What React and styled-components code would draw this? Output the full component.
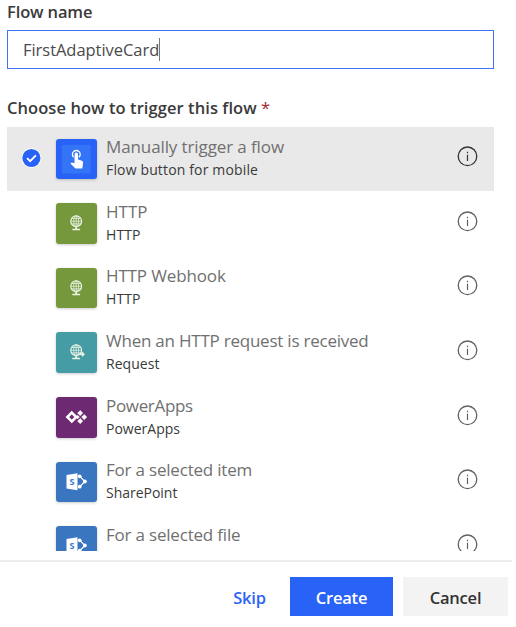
import React from 'react';
import styled, { createGlobalStyle } from 'styled-components';

const Global = createGlobalStyle`
  * { box-sizing: border-box; }
  body { margin: 0; background: #fff; overflow: hidden; font-family: "Open Sans", "Noto Sans", sans-serif; color: #333; }
`;

const Dialog = styled.main`
  width: 516px;
  height: 627px;
  display: flex;
  flex-direction: column;
  overflow: hidden;
`;

const Form = styled.div`
  padding: 0 22px 0 7px;
  height: 551px;
  overflow: hidden;
`;

const Label = styled.label`
  display: block;
  height: ${p => p.$height}px;
  line-height: 24px;
  font-size: 16.5px;
  font-weight: 600;
  letter-spacing: ${p => p.$spacing}px;
  white-space: nowrap;
  color: #3a3a3a;
`;

const Required = styled.span`
  color: #a4262c;
  font-weight: 400;
`;

const Field = styled.div`
  display: flex;
  align-items: center;
  height: 39px;
  margin-bottom: 27px;
  padding-left: 15px;
  border: 1px solid #3d73f5;
  font-size: 16.5px;
  letter-spacing: -0.04px;
  color: #4a4a4a;
`;

const Caret = styled.span`
  width: 1px;
  height: 23px;
  background: #777;
`;

const List = styled.ul`
  margin: 0;
  padding: 0;
  list-style: none;
`;

const Row = styled.li`
  display: flex;
  height: 64.67px;
  padding: 12px 16px 0 15px;
  background: ${p => (p.$selected ? '#e9e9e9' : '#fff')};
  color: ${p => (p.$selected ? '#333' : '#606060')};
`;

const CheckSlot = styled.div`
  width: 34px;
  padding-top: 9.5px;
  svg { display: block; }
`;

const Tile = styled.div`
  width: 40.5px;
  height: 40.5px;
  border-radius: 3px;
  overflow: hidden;
  background: ${p => p.$color};
  box-shadow: 0 1px 3px rgba(0, 0, 0, 0.2);
  svg { display: block; }
`;

const Texts = styled.div`
  flex: 1;
  margin: -3.4px 0 0 9.5px;
  white-space: nowrap;
`;

const Title = styled.div`
  font-size: 17px;
  line-height: 24px;
  letter-spacing: ${p => p.$spacing}px;
  color: #707070;
`;

const Subtitle = styled.div`
  font-size: 14px;
  line-height: 21.4px;
  letter-spacing: ${p => p.$spacing}px;
  color: #3a3a3a;
`;

const InfoSlot = styled.div`
  padding-top: 7.4px;
  svg { display: block; }
`;

const Footer = styled.footer`
  display: flex;
  justify-content: flex-end;
  gap: 10px;
  margin-top: 9px;
  width: 512px;
  height: 67px;
  padding: 15px 4px 0 0;
  border-top: 2px solid #ededed;
`;

const variants = {
  link: 'background: #fff; color: #2b63f6;',
  primary: 'background: #2962f6; color: #fff;',
  neutral: 'background: #f3f3f3; color: #333;',
};

const Button = styled.button`
  width: ${p => p.$width}px;
  height: 39px;
  padding: 2px 0 0;
  border: 0;
  font: 600 16.5px "Open Sans", "Noto Sans", sans-serif;
  letter-spacing: -0.2px;
  ${p => variants[p.$variant]}
`;

const Check = () => (
  <svg width="20" height="21" viewBox="0 0 20 21">
    <circle cx="9.4" cy="10" r="10" fill="#fff" />
    <circle cx="9.4" cy="10" r="9.1" fill="#2962f6" />
    <path d="M5.1 10.2l3 3 5.8-5.9" fill="none" stroke="#fff" strokeWidth="1.9" />
  </svg>
);

const Info = () => (
  <svg width="21" height="21" viewBox="0 0 21 21">
    <circle cx="10.5" cy="10.3" r="9.3" fill="none" stroke="currentColor" strokeWidth="1.3" />
    <path d="M10.5 8.7v6.2M10.5 5.8v1.5" stroke="currentColor" strokeWidth="1.2" />
  </svg>
);

const Touch = () => (
  <svg width="40" height="40" viewBox="0 0 40 40">
    <rect x="6" y="6" width="28.5" height="28.5" fill="#3474f7" />
    <path d="M17.6 18.200a3.9 3.9 0 1 1 5.400 0" fill="none" stroke="#fff" strokeWidth="1.3" />
    <path d="M18.500 15.400a1.800 1.800 0 0 1 3.600 0v5l3.900 1.400q1.300.5 1.100 1.900l-.8 5.800h-6.900l-4.900-4.900 1.200-1.200 2.800.8z" fill="#fff" />
  </svg>
);

const Globe = ({ arrow }) => (
  <svg width="40" height="40" viewBox="0 0 40 40">
    <g fill="none" stroke="#eaf3e4" strokeWidth="1">
      <circle cx="20.2" cy="18.2" r="5.4" strokeWidth="1.2" />
      <ellipse cx="20.2" cy="18.2" rx="2.5" ry="5.4" strokeWidth="0.8" />
      <path d="M14.8 18.2h10.8M15.7 15.5h9M15.7 20.9h9M20.2 12.8v10.8" strokeWidth="0.8" />
      <path d="M20.2 23.6v2.4" strokeWidth="1.8" />
      <path d="M16.3 26.5h7.8" strokeWidth="1.7" />
      {arrow && <path d="M22.5 22.2h5M25.9 20.3l2 1.9-2 1.9" strokeWidth="1.5" />}
    </g>
  </svg>
);

const PowerApps = () => (
  <svg width="40" height="40" viewBox="0 0 40 40">
    <path d="M15.8 15.7l4.4 4.4-4.4 4.400-4.400-4.400z" fill="none" stroke="#fff" strokeWidth="2.6" />
    <g fill="#fff" stroke="#fff" strokeWidth="0.5" strokeLinejoin="round">
      <path d="M24.2 13.5l2.6 2.6-2.6 2.6-2.6-2.6zM24.2 21.5l2.6 2.6-2.6 2.6-2.6-2.6zM28.2 17.5l2.6 2.6-2.6 2.6-2.6-2.6zM21.5 18.2l1.9 1.9-1.9 1.9-1.2-1.9z" />
    </g>
  </svg>
);

const Letter = styled.text`
  font: 700 9px "Open Sans", sans-serif;
  fill: #3a76bf;
`;

const SharePoint = () => (
  <svg width="40" height="40" viewBox="0 0 40 40">
    <path d="M22 14.3h1.8l5 5.2-5 5.2H22" fill="none" stroke="#fff" strokeWidth="1.2" />
    <g fill="#fff">
      <circle cx="23.7" cy="14.3" r="1.9" />
      <circle cx="28.9" cy="19.5" r="1.9" />
      <circle cx="23.7" cy="24.7" r="1.9" />
      <path d="M10.5 12.9l11-1.7v17l-11-1.7z" />
    </g>
    <Letter x="13.4" y="22.9">S</Letter>
  </svg>
);

const triggers = [
  { title: 'Manually trigger a flow', spacing: -0.11, sub: 'Flow button for mobile', subSpacing: 0.15, color: '#2962f6', icon: <Touch />, selected: true },
  { title: 'HTTP', spacing: 0, sub: 'HTTP', subSpacing: 0.1, color: '#76983c', icon: <Globe /> },
  { title: 'HTTP Webhook', spacing: -0.14, sub: 'HTTP', subSpacing: 0.1, color: '#76983c', icon: <Globe /> },
  { title: 'When an HTTP request is received', spacing: -0.23, sub: 'Request', subSpacing: 0.05, color: '#459ca5', icon: <Globe arrow /> },
  { title: 'PowerApps', spacing: -0.33, sub: 'PowerApps', subSpacing: 0, color: '#6d2a72', icon: <PowerApps /> },
  { title: 'For a selected item', spacing: -0.2, sub: 'SharePoint', subSpacing: -0.02, color: '#3a76bf', icon: <SharePoint /> },
  { title: 'For a selected file', spacing: -0.2, color: '#3a76bf', icon: <SharePoint /> },
];

export default function App() {
  return (
    <Dialog>
      <Global />
      <Form>
        <Label $height={30} $spacing={-0.13}>Flow name</Label>
        <Field>FirstAdaptiveCard<Caret /></Field>
        <Label $height={30.5} $spacing={0.07}>Choose how to trigger this flow <Required>*</Required></Label>
        <List>
          {triggers.map(t => (
            <Row key={t.title} $selected={t.selected}>
              <CheckSlot>{t.selected && <Check />}</CheckSlot>
              <Tile $color={t.color}>{t.icon}</Tile>
              <Texts>
                <Title $spacing={t.spacing}>{t.title}</Title>
                {t.sub && <Subtitle $spacing={t.subSpacing}>{t.sub}</Subtitle>}
              </Texts>
              <InfoSlot><Info /></InfoSlot>
            </Row>
          ))}
        </List>
      </Form>
      <Footer>
        <Button $variant="link" $width={61}>Skip</Button>
        <Button $variant="primary" $width={103}>Create</Button>
        <Button $variant="neutral" $width={105}>Cancel</Button>
      </Footer>
    </Dialog>
  );
}
